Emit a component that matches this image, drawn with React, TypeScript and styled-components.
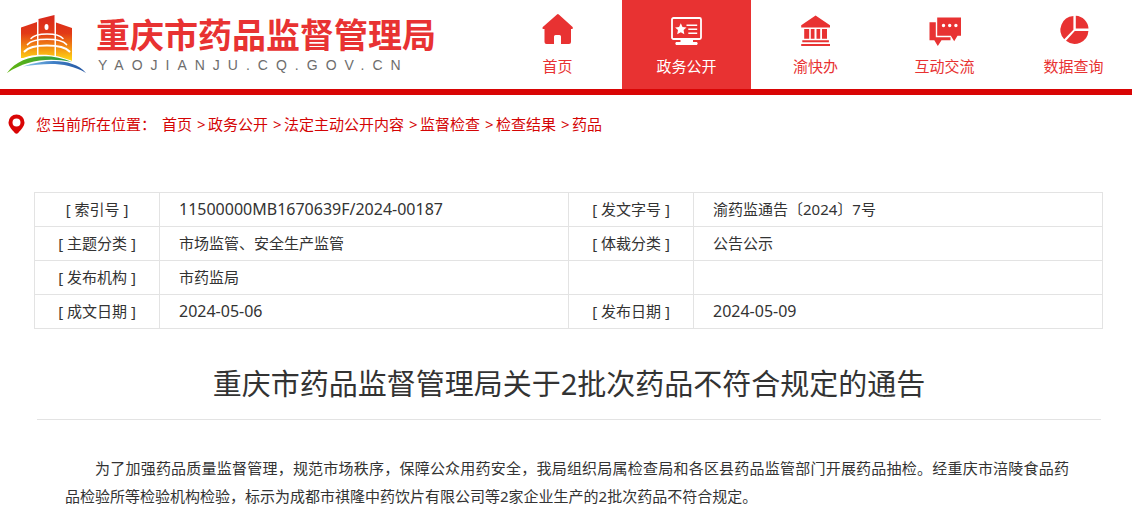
import React from "react";
import styled, { createGlobalStyle } from "styled-components";

const GlobalStyle = createGlobalStyle`
  * { box-sizing: border-box; }
  body {
    margin: 0;
    background: #fff;
    color: #333;
    font-family: "Noto Sans", "Noto Sans CJK SC", sans-serif;
    font-size: 15px;
    line-height: 28px;
  }
  a { color: inherit; text-decoration: none; }
`;

const Header = styled.header`
  display: flex;
  justify-content: space-between;
  height: 95px;
  border-bottom: 6px solid #d90505;
  overflow: hidden;
`;

const Brand = styled.a`
  display: flex;
  flex: none;
  gap: 9px;
  padding: 12px 0 0 6px;
`;

const Emblem = styled.svg`
  width: 81px;
  height: 64px;
`;

const BrandText = styled.div`
  display: flex;
  flex-direction: column;
`;

const BrandName = styled.span`
  color: #e83232;
  font-family: "Noto Sans CJK SC", sans-serif;
  font-size: 34px;
  font-weight: 700;
  line-height: 44px;
  white-space: nowrap;
`;

const BrandDomain = styled.span`
  color: #6d6d6d;
  font-family: "Liberation Sans", sans-serif;
  font-size: 14px;
  letter-spacing: 8px;
  line-height: 18px;
  padding-left: 2px;
`;

const Nav = styled.nav`
  display: flex;
  flex: none;
  margin-right: -6px;
`;

const NavLink = styled.a<{ $active?: boolean }>`
  display: flex;
  flex-direction: column;
  align-items: center;
  width: 129px;
  padding-top: 12px;
  background: ${(p) => (p.$active ? "#e83232" : "transparent")};
  color: ${(p) => (p.$active ? "#fff" : "#e83232")};
  line-height: 36px;
`;

const NavIcon = styled.svg`
  width: 40px;
  height: 36px;
  fill: currentColor;
`;

const Breadcrumb = styled.nav`
  display: flex;
  align-items: center;
  padding: 15px 8px 0;
  color: #d40505;
`;

const Pin = styled.svg`
  width: 17px;
  height: 20px;
  margin-right: 11px;
`;

const CrumbLabel = styled.span`
  margin-right: 6px;
`;

const Crumb = styled.a`
  & + &::before {
    content: ">";
    display: inline-block;
    width: 11px;
    padding-left: 5px;
  }
`;

const Main = styled.main`
  padding: 54px 29px 0 34px;
`;

const InfoTable = styled.table`
  width: 100%;
  border-collapse: collapse;
  table-layout: fixed;
`;

const Label = styled.th`
  width: 125px;
  height: 34px;
  padding: 0 0 2px;
  border: 1px solid #e3e3e3;
  font-weight: 400;
  line-height: 30px;
  text-align: center;
`;

const Value = styled.td<{ $numeric?: boolean }>`
  height: 34px;
  padding: 0 19px 2px;
  border: 1px solid #e3e3e3;
  font-size: ${(p) => (p.$numeric ? 16 : 15)}px;
  line-height: 30px;
`;

const Title = styled.h1`
  margin: 32px 2px 0 3px;
  padding-bottom: 12px;
  border-bottom: 1px solid #e3e3e3;
  font-size: 29px;
  font-weight: 400;
  line-height: 46px;
  text-align: center;
`;

const Article = styled.article`
  padding: 34px 34px 20px 31px;
`;

const Paragraph = styled.p`
  margin: 0;
  text-indent: 2em;
  text-align: justify;
`;

const HomeIcon = () => (
  <NavIcon viewBox="0 0 40 36" aria-hidden="true">
    <path d="M19 2.400q.9-.8 1.800 0L34.600 15q.9 1.600-.4 2H33v13q0 2-2 2h-8v-7.500q0-1.500-1.500-1.500h-4q-1.500 0-1.500 1.500V32H8.500q-2 0-2-2V17H5q-1.200-.5-.2-2z" />
  </NavIcon>
);

const ScreenIcon = () => (
  <NavIcon viewBox="0 0 40 36" aria-hidden="true">
    <rect x="5" y="6" width="29" height="21" rx="1.500" fill="none" stroke="currentColor" strokeWidth="1.800" />
    <path d="M13.500 27h12.500v3h4q1.500 1.300 0 3H9q-1.500-1.700 0-3h4.500z" />
    <path d="M13.800 11.200l1.700 3.700 4 .5-2.900 2.700.7 4.100-3.500-2-3.600 2 .8-4.100-2.900-2.700 4-.5z" />
    <path d="M19.500 12.400h10.700v1.700H19.500zM21.300 16.400h8.900v1.700h-8.900zM21.300 20.400h8.900v1.700h-8.900z" />
  </NavIcon>
);

const HallIcon = () => (
  <NavIcon viewBox="0 0 40 36" aria-hidden="true">
    <path d="M19.600 3.600L34 13.300v2.200H5.200v-2.200zM8.200 17h5v9.800h-5zM14.800 17h3.700v9.800h-3.700zM20.500 17h3.700v9.800h-3.700zM26 17h5v9.800h-5zM6.300 28.200h26.600v2H6.300zM5.200 32H34v2H5.200z" />
  </NavIcon>
);

const ChatIcon = () => (
  <NavIcon viewBox="0 0 40 36" aria-hidden="true">
    <path d="M4.500 10.300h6.300V25.300h14.700v3h-9L12.800 34 9.300 28.300H4.500z" />
    <path fillRule="evenodd" d="M12.200 5.500H36v18.200h-3.500L29.200 29.200 25.800 23.700H12.200zM18.500 11.800a1.700 1.700 0 100 3.400 1.700 1.700 0 000-3.400zm6.200 0a1.700 1.700 0 100 3.400 1.700 1.700 0 000-3.400zm6.200 0a1.700 1.700 0 100 3.400 1.700 1.700 0 000-3.400z" />
  </NavIcon>
);

const PieIcon = () => (
  <NavIcon viewBox="0 0 40 36" aria-hidden="true">
    <path d="M19.400 4V17.800L10.200 27.200A13.800 13.800 0 0119.400 4zM21.800 3.700A13.500 13.500 0 0134.500 16.500H21.800zM20.800 19H34.400A13.800 13.800 0 0112 28.800z" />
  </NavIcon>
);

const BrandEmblem = () => (
  <Emblem viewBox="0 0 81 64" aria-hidden="true">
    <defs>
      <linearGradient id="tower" x1="0" y1="0" x2="0" y2="1">
        <stop offset="0" stopColor="#d9281c" />
        <stop offset=".4" stopColor="#e23a16" />
        <stop offset=".75" stopColor="#f59a12" />
        <stop offset="1" stopColor="#ffdd16" />
      </linearGradient>
      <linearGradient id="river" x1="0" y1="0" x2="1" y2="0">
        <stop offset="0" stopColor="#8cc8ea" />
        <stop offset=".5" stopColor="#3f7fc6" />
        <stop offset="1" stopColor="#22539f" />
      </linearGradient>
      <linearGradient id="hill" x1="0" y1="0" x2="1" y2="0">
        <stop offset="0" stopColor="#62b50f" />
        <stop offset="1" stopColor="#259b46" />
      </linearGradient>
    </defs>
    <path fill="url(#tower)" d="M15 15.500L31 10V46H15zM32.500 7L48.500 3V46H32.500zM50 10.500L66 16V49L50 46z" />
    <ellipse cx="40.500" cy="15" rx="2" ry="3" fill="#fff" />
    <g fill="none" stroke="#fff" strokeLinecap="round">
      <path strokeWidth="1.500" d="M25 26.500c5-6 27-6 32 0" />
      <path strokeWidth="1.700" d="M21.500 32.500c6-7 33-7 39 0" />
      <path strokeWidth="2" d="M18.500 39.500c7-8 38-8 45 0" />
    </g>
    <path fill="#fff" d="M11 49C25 40 50 41 68 50L66 53L11 53z" />
    <path fill="url(#hill)" d="M1 61C14 43 42 40 66 50C43 45 20 48 1 61z" />
    <path fill="url(#river)" d="M17 54.500C42 46 68 47 80 61C61 50 42 51 17 54.500z" />
  </Emblem>
);

const navItems = [
  { text: "首页", Icon: HomeIcon },
  { text: "政务公开", Icon: ScreenIcon, active: true },
  { text: "渝快办", Icon: HallIcon },
  { text: "互动交流", Icon: ChatIcon },
  { text: "数据查询", Icon: PieIcon },
];

const crumbs = ["首页", "政务公开", "法定主动公开内容", "监督检查", "检查结果", "药品"];

type Field = { label: string; value: string; numeric?: boolean };

const rows: [Field, Field | null][] = [
  [
    { label: "索引号", value: "11500000MB1670639F/2024-00187", numeric: true },
    { label: "发文字号", value: "渝药监通告〔2024〕7号" },
  ],
  [
    { label: "主题分类", value: "市场监管、安全生产监管" },
    { label: "体裁分类", value: "公告公示" },
  ],
  [{ label: "发布机构", value: "市药监局" }, null],
  [
    { label: "成文日期", value: "2024-05-06", numeric: true },
    { label: "发布日期", value: "2024-05-09", numeric: true },
  ],
];

const FieldCells = ({ field }: { field: Field | null }) =>
  field ? (
    <>
      <Label scope="row">[ {field.label} ]</Label>
      <Value $numeric={field.numeric}>{field.value}</Value>
    </>
  ) : (
    <>
      <Value />
      <Value />
    </>
  );

export default function App() {
  return (
    <>
      <GlobalStyle />
      <Header>
        <Brand href="#">
          <BrandEmblem />
          <BrandText>
            <BrandName>重庆市药品监督管理局</BrandName>
            <BrandDomain>YAOJIANJU.CQ.GOV.CN</BrandDomain>
          </BrandText>
        </Brand>
        <Nav>
          {navItems.map(({ text, Icon, active }) => (
            <NavLink key={text} href="#" $active={active}>
              <Icon />
              {text}
            </NavLink>
          ))}
        </Nav>
      </Header>
      <Breadcrumb>
        <Pin viewBox="0 0 17 20" aria-hidden="true">
          <path
            fill="#d90505"
            fillRule="evenodd"
            d="M8.500.5a8 8 0 018 8c0 4-4 7.500-6.300 10.500q-1.700 1.500-3.400 0C4.500 16 .5 12.500.5 8.500a8 8 0 018-8zm0 4a4 4 0 100 8 4 4 0 000-8z"
          />
        </Pin>
        <CrumbLabel>您当前所在位置：</CrumbLabel>
        {crumbs.map((text) => (
          <Crumb key={text} href="#">
            {text}
          </Crumb>
        ))}
      </Breadcrumb>
      <Main>
        <InfoTable>
          <tbody>
            {rows.map(([left, right]) => (
              <tr key={left.label}>
                <FieldCells field={left} />
                <FieldCells field={right} />
              </tr>
            ))}
          </tbody>
        </InfoTable>
        <Title>重庆市药品监督管理局关于2批次药品不符合规定的通告</Title>
        <Article>
          <Paragraph>
            为了加强药品质量监督管理，规范市场秩序，保障公众用药安全，我局组织局属检查局和各区县药品监管部门开展药品抽检。经重庆市涪陵食品药品检验所等检验机构检验，标示为成都市祺隆中药饮片有限公司等2家企业生产的2批次药品不符合规定。
          </Paragraph>
        </Article>
      </Main>
    </>
  );
}
